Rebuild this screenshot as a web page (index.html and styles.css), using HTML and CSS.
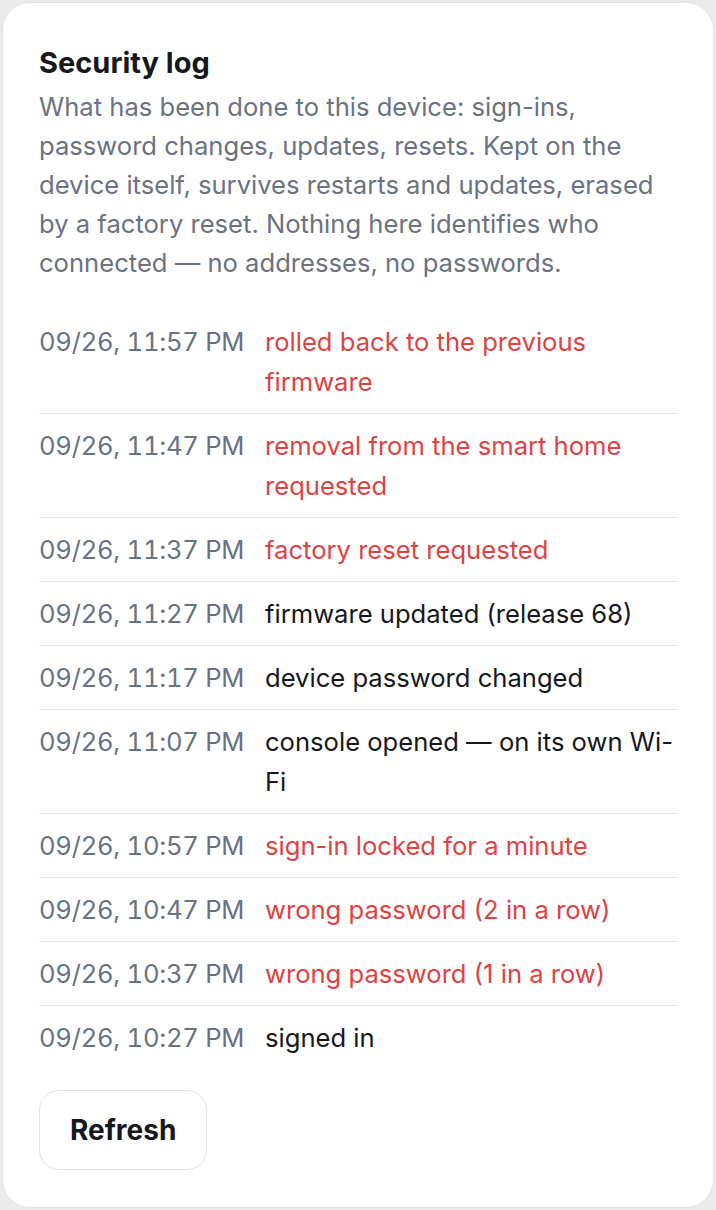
FILE: index.html
```html
<!DOCTYPE html>
<html lang="en">
<head>
<meta charset="utf-8">
<title>Security log</title>
<link rel="stylesheet" href="styles.css">
</head>
<body>
<section class="card">
  <h2 class="title">Security log</h2>
  <p class="desc">What has been done to this device: sign-ins, password changes, updates, resets. Kept on the device itself, survives restarts and updates, erased by a factory reset. Nothing here identifies who connected — no addresses, no passwords.</p>
  <ul class="log">
    <li class="row"><span class="time">09/26, 11:57 PM</span><span class="event bad">rolled back to the previous firmware</span></li>
    <li class="row"><span class="time">09/26, 11:47 PM</span><span class="event bad">removal from the smart home requested</span></li>
    <li class="row"><span class="time">09/26, 11:37 PM</span><span class="event bad">factory reset requested</span></li>
    <li class="row"><span class="time">09/26, 11:27 PM</span><span class="event">firmware updated (release 68)</span></li>
    <li class="row"><span class="time">09/26, 11:17 PM</span><span class="event">device password changed</span></li>
    <li class="row"><span class="time">09/26, 11:07 PM</span><span class="event">console opened — on its own Wi-Fi</span></li>
    <li class="row"><span class="time">09/26, 10:57 PM</span><span class="event bad">sign-in locked for a minute</span></li>
    <li class="row"><span class="time">09/26, 10:47 PM</span><span class="event bad">wrong password (2 in a row)</span></li>
    <li class="row"><span class="time">09/26, 10:37 PM</span><span class="event bad">wrong password (1 in a row)</span></li>
    <li class="row"><span class="time">09/26, 10:27 PM</span><span class="event">signed in</span></li>
  </ul>
  <button class="btn" type="button">Refresh</button>
</section>
</body>
</html>
```
FILE: styles.css
```css
* { box-sizing: border-box; }
html, body { margin: 0; padding: 0; }
body {
  background: #ebebeb;
  font-family: Inter, "Noto Sans", sans-serif;
  padding: 2px;
}
.card {
  background: #fff;
  border: 1px solid #e2e2e2;
  border-radius: 28px;
  padding: 42px 35px 35px 36px;
  min-height: 1206px;
}
.title {
  margin: 0;
  font-size: 29px;
  line-height: 36px;
  font-weight: 700;
  color: #16181b;
}
.desc {
  margin: 6px 0 28px;
  font-size: 25.6px;
  line-height: 39px;
  color: #6b7280;
}
.log {
  list-style: none;
  margin: 0;
  padding: 0;
}
.row {
  display: flex;
  padding: 12px 0 11px;
  border-bottom: 1px solid #e5e7eb;
  font-size: 25.6px;
  line-height: 40px;
}
.row:last-child { border-bottom: none; }
.time {
  flex: 0 0 226px;
  color: #6b7280;
  white-space: nowrap;
  font-variant-numeric: tabular-nums;
  letter-spacing: -0.25px;
}
.event { flex: 1 1 auto; min-width: 0; color: #16181b; }
.event.bad { color: #dc4343; }
.btn {
  margin-top: 21px;
  font-family: inherit;
  font-size: 28px;
  font-weight: 700;
  color: #16181b;
  background: #fff;
  border: 1px solid #e3e3e3;
  border-radius: 20px;
  height: 80px;
  padding: 0 30px;
}
```
